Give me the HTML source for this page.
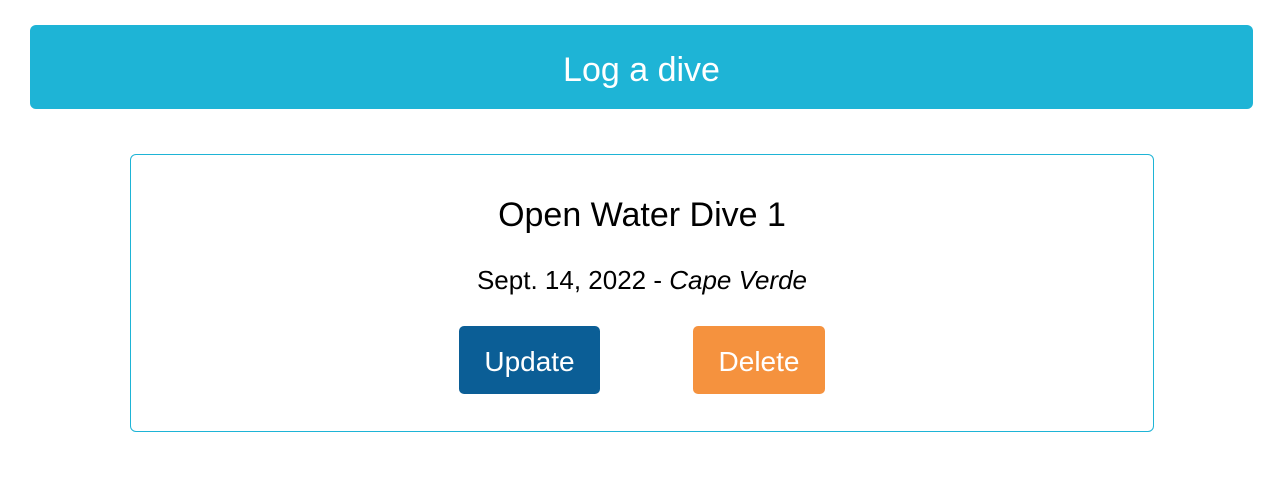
<!DOCTYPE html>
<html><head><style>
body{margin:0;background:#fff;font-family:"Liberation Sans",sans-serif;width:1284px;height:482px;position:relative;overflow:hidden}
.top{position:absolute;left:30px;top:25px;width:1223px;height:84px;background:#1eb4d6;border-radius:6px;color:#fff;font-size:34px;text-align:center;line-height:90px}
.card{position:absolute;left:130px;top:154px;width:1022px;height:276px;border:1px solid #1eb4d6;border-radius:6px}
.t{position:absolute;left:0;right:0;top:196px;text-align:center;font-size:34px;color:#000}
.s{position:absolute;left:0;right:0;top:265px;text-align:center;font-size:26px;color:#000}
.b{position:absolute;top:326px;height:68px;line-height:72px;color:#fff;font-size:28px;text-align:center;border-radius:5px}
</style></head><body>
<div class="top">Log a dive</div>
<div class="card"></div>
<div class="t">Open Water Dive 1</div>
<div class="s">Sept. 14, 2022 - <i>Cape Verde</i></div>
<div class="b" style="left:459px;width:141px;background:#0b5e96">Update</div>
<div class="b" style="left:693px;width:132px;background:#f5923e">Delete</div>
</body></html>
